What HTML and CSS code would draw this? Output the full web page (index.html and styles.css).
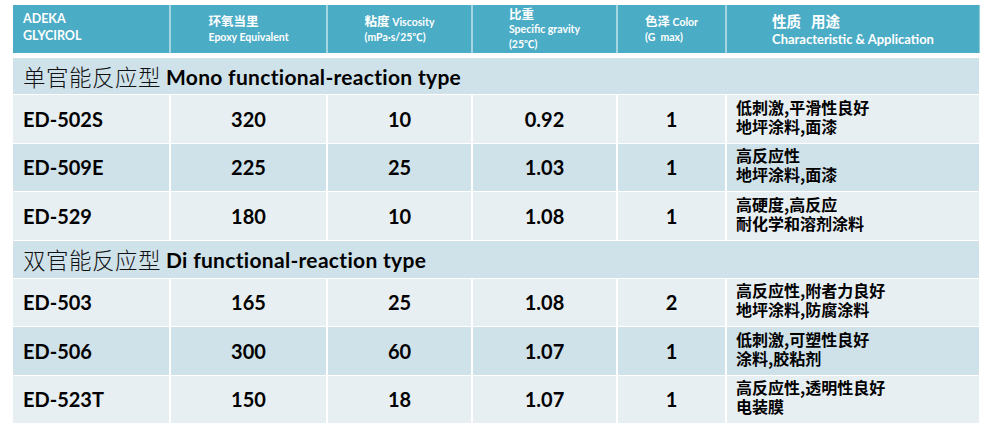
FILE: index.html
```html
<!DOCTYPE html>
<html lang="zh">
<head>
<meta charset="utf-8">
<title>ADEKA GLYCIROL</title>
<link rel="stylesheet" href="styles.css">
</head>
<body>
<div class="table">
  <div class="hd hd-first"><div class="hd-in l17">ADEKA<br>GLYCIROL</div></div>
  <div class="hd"><div class="hd-in"><span class="zh">环氧当里</span><br>Epoxy Equivalent</div></div>
  <div class="hd"><div class="hd-in"><span class="zh">粘度</span> Viscosity<br>(mPa·s/25℃)</div></div>
  <div class="hd"><div class="hd-in"><span class="zh">比重</span><br>Specific gravity<br>(25℃)</div></div>
  <div class="hd"><div class="hd-in"><span class="zh">色泽</span> Color<br>(G&nbsp;&nbsp;max)</div></div>
  <div class="hd hd-last"><div class="hd-in l17 big"><span class="zh zh-big">性质&nbsp;&nbsp;&nbsp;用途</span><br>Characteristic &amp; Application</div></div>

  <div class="sec sec-first"><span class="sec-zh">单官能反应型</span><span class="sec-en">Mono functional-reaction type</span></div>

  <div class="c name light">ED-502S</div>
  <div class="c num light">320</div>
  <div class="c num light">10</div>
  <div class="c num light">0.92</div>
  <div class="c num light">1</div>
  <div class="c desc light"><span class="ln">低刺激,平滑性良好</span><span class="ln">地坪涂料,面漆</span></div>

  <div class="c name dark">ED-509E</div>
  <div class="c num dark">225</div>
  <div class="c num dark">25</div>
  <div class="c num dark">1.03</div>
  <div class="c num dark">1</div>
  <div class="c desc dark"><span class="ln">高反应性</span><span class="ln">地坪涂料,面漆</span></div>

  <div class="c name light">ED-529</div>
  <div class="c num light">180</div>
  <div class="c num light">10</div>
  <div class="c num light">1.08</div>
  <div class="c num light">1</div>
  <div class="c desc light"><span class="ln">高硬度,高反应</span><span class="ln">耐化学和溶剂涂料</span></div>

  <div class="sec"><span class="sec-zh">双官能反应型</span><span class="sec-en">Di functional-reaction type</span></div>

  <div class="c name light">ED-503</div>
  <div class="c num light">165</div>
  <div class="c num light">25</div>
  <div class="c num light">1.08</div>
  <div class="c num light">2</div>
  <div class="c desc light"><span class="ln">高反应性,附者力良好</span><span class="ln">地坪涂料,防腐涂料</span></div>

  <div class="c name dark">ED-506</div>
  <div class="c num dark">300</div>
  <div class="c num dark">60</div>
  <div class="c num dark">1.07</div>
  <div class="c num dark">1</div>
  <div class="c desc dark"><span class="ln">低刺激,可塑性良好</span><span class="ln">涂料,胶粘剂</span></div>

  <div class="c name light">ED-523T</div>
  <div class="c num light">150</div>
  <div class="c num light">18</div>
  <div class="c num light">1.07</div>
  <div class="c num light">1</div>
  <div class="c desc light"><span class="ln">高反应性,透明性良好</span><span class="ln">电装膜</span></div>
</div>
</body>
</html>
```

FILE: styles.css
```css
html, body {
  margin: 0;
  padding: 0;
  background: #ffffff;
}

body {
  font-family: "Lato", "Noto Sans CJK SC", sans-serif;
  color: #000000;
}

.table {
  margin: 5px 0 0 13px;
  width: 966px;
  display: grid;
  grid-template-columns: 156px 155px 143px 143px 107px 252px;
  grid-template-rows: 48px 40px 47.5px 47.5px 47.5px 37px 47.5px 47.5px 47.5px;
  column-gap: 2px;
  row-gap: 1px;
  background: #ffffff;
}

.hd {
  background: #4bacc6;
  color: #ffffff;
  display: flex;
  align-items: center;
  justify-content: center;
  font-weight: 700;
  font-size: 10.5px;
  line-height: 14.5px;
  position: relative;
}

.hd::after {
  content: "";
  position: absolute;
  top: 0;
  bottom: 0;
  right: -2px;
  width: 2px;
  background: #a6d5e2;
}

.hd-last::after {
  width: 1px;
  right: -1px;
  background: #8fcadb;
}

.hd-first {
  justify-content: flex-start;
  padding: 0 0 4px 10px;
}

.hd-in {
  text-align: left;
}

.l17 {
  font-size: 12.5px;
  line-height: 17px;
}

.big {
  font-size: 13px;
  padding-top: 2px;
}

.zh {
  font-family: "Noto Sans CJK SC", sans-serif;
  font-size: 12.5px;
}

.zh-big {
  font-size: 14.5px;
}

.sec {
  grid-column: 1 / -1;
  background: #d0e2e9;
  display: flex;
  align-items: center;
  padding-left: 10px;
}

.sec-first {
  margin-top: 4px;
}

.sec-zh {
  font-family: "Noto Sans CJK SC", sans-serif;
  font-weight: 300;
  font-size: 22.5px;
  letter-spacing: 0.5px;
  color: #111111;
}

.sec-en {
  font-weight: 700;
  font-size: 21px;
  letter-spacing: 0.3px;
  margin-left: 5px;
}

.c {
  display: flex;
  align-items: center;
}

.light {
  background: #e8eff2;
}

.dark {
  background: #d0e2e9;
}

.name {
  padding-left: 10px;
  font-weight: 700;
  font-size: 20px;
}

.num {
  justify-content: center;
  font-weight: 700;
  font-size: 20px;
}

.desc {
  flex-direction: column;
  align-items: flex-start;
  justify-content: center;
  padding-left: 9px;
  padding-bottom: 4px;
  font-family: "Noto Sans CJK SC", sans-serif;
  font-weight: 700;
  font-size: 16px;
}

.ln {
  display: block;
  height: 19px;
  line-height: 19px;
  overflow: visible;
}
```
